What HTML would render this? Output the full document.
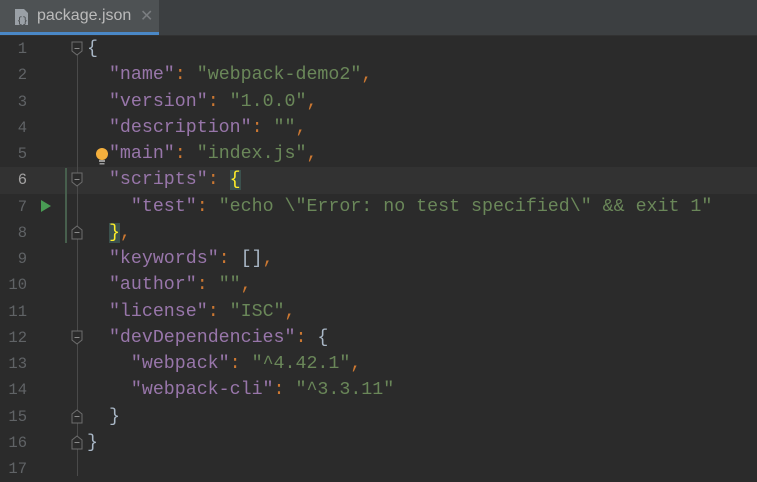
<!DOCTYPE html>
<html><head><style>
body{margin:0;width:757px;height:476px;background:#2b2b2b;overflow:hidden;font-family:"Liberation Mono",monospace;}
#tabs{position:absolute;left:0;top:0;width:757px;height:35px;background:#3c3f41;border-bottom:1px solid #323232}
#tab{position:absolute;left:0;top:0;width:159px;height:32px;background:#4e5254;border-bottom:3px solid #4a88c7}
#tab .t{position:absolute;left:37px;top:7px;font:16px "Liberation Sans",sans-serif;color:#bbbbbb}
#tab .x{position:absolute;left:140px;top:6px;font:16px "Liberation Sans",sans-serif;color:#7a7d80}
.line{position:absolute;left:0;height:26.3px;width:757px;font-size:18.3px;line-height:26px;white-space:pre;color:#a9b7c6}
.ln{position:absolute;left:0;width:27px;text-align:right;color:#606366;font-size:15.5px}
.code{position:absolute;left:87px}
.k{color:#9876aa}.s{color:#6a8759}.p{color:#cc7832}
.cur{background:#323232}
.hb{background:#3b514d;color:#ffef28}
.ov{position:absolute;z-index:2}
</style></head><body>
<div id="tabs"><div id="tab">
<svg style="position:absolute;left:13px;top:8px" width="18" height="18"><path d="M2 1h9l4 4v12H2z" fill="#9aa0a6"/><text x="4" y="15" font-size="9" fill="#3c3f41" font-family="Liberation Mono">{}</text></svg>
<span class="t">package.json</span><span class="x">✕</span></div></div>
<div class="ov" style="left:77px;top:48px;width:1px;height:428px;background:#4a4a4a"></div>
<div class="ov" style="left:65px;top:168px;width:2px;height:75px;background:#475f4d"></div>
<div id="ed"></div>
<script>
var L=[
'{',
'  <span class="k">"name"</span><span class="p">:</span> <span class="s">"webpack-demo2"</span><span class="p">,</span>',
'  <span class="k">"version"</span><span class="p">:</span> <span class="s">"1.0.0"</span><span class="p">,</span>',
'  <span class="k">"description"</span><span class="p">:</span> <span class="s">""</span><span class="p">,</span>',
'  <span class="k">"main"</span><span class="p">:</span> <span class="s">"index.js"</span><span class="p">,</span>',
'  <span class="k">"scripts"</span><span class="p">:</span> <span class="hb">{</span>',
'    <span class="k">"test"</span><span class="p">:</span> <span class="s">"echo \\"Error: no test specified\\" &amp;&amp; exit 1"</span>',
'  <span class="hb">}</span><span class="p">,</span>',
'  <span class="k">"keywords"</span><span class="p">:</span> []<span class="p">,</span>',
'  <span class="k">"author"</span><span class="p">:</span> <span class="s">""</span><span class="p">,</span>',
'  <span class="k">"license"</span><span class="p">:</span> <span class="s">"ISC"</span><span class="p">,</span>',
'  <span class="k">"devDependencies"</span><span class="p">:</span> {',
'    <span class="k">"webpack"</span><span class="p">:</span> <span class="s">"^4.42.1"</span><span class="p">,</span>',
'    <span class="k">"webpack-cli"</span><span class="p">:</span> <span class="s">"^3.3.11"</span>',
'  }',
'}',
''];
var h='';
L.forEach(function(c,i){
 var top=36+i*26.25;
 h+='<div class="line'+(i==5?' cur':'')+'" style="top:'+top+'px"><span class="ln" style="'+(i==5?'color:#a4a3a3':'')+'">'+(i+1)+'</span><span class="code">'+c+'</span></div>';
});
var folds=[0,5,7,11,14,15];
folds.forEach(function(i){
 var y=36+i*26.25+5;var up=(i==7||i==14||i==15);
 var d=up?'M1 14V5l5-4 5 4v9z':'M1 1h10v9l-5 4-5-4z';
 h+='<svg class="ov" style="left:71px;top:'+y+'px" width="13" height="16"><path d="'+d+'" fill="#2b2b2b" stroke="#6e6e6e"/><path d="M3.5 7.5h5" stroke="#8a8a8a"/></svg>';
});
h+='<svg class="ov" style="left:40px;top:199px" width="12" height="14"><path d="M1 1l10 6-10 6z" fill="#499c54"/></svg>';
h+='<svg class="ov" style="left:95px;top:148px" width="14" height="18"><circle cx="7" cy="6" r="6" fill="#f4af3d"/><rect x="4" y="12" width="6" height="2" fill="#9a9a9a"/><rect x="4.5" y="15" width="5" height="1.5" fill="#9a9a9a"/></svg>';
document.getElementById('ed').innerHTML=h;
</script>
</body></html>
